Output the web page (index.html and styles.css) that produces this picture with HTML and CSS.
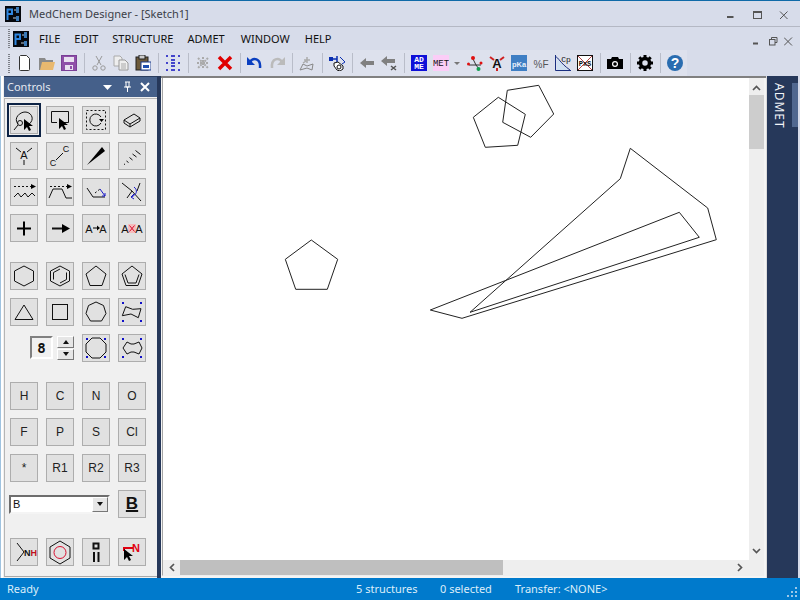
FILE: index.html
```html
<!DOCTYPE html>
<html lang="en">
<head>
  <meta charset="UTF-8">
  <title>MedChem Designer - [Sketch1]</title>
  <link rel="stylesheet" href="styles.css">
</head>
<body>
  <div class="app">
    <div class="titlebar">
      <svg class="logo" viewBox="0 0 16 16"><rect width="16" height="16" fill="#05070d"/><path d="M2.500 14V3.500h4.500V8H3" stroke="#2f86e0" stroke-width="2" fill="none"/><path d="M11 1h3v6h-3zM11 10h3v5h-3z" fill="#3a79b8"/><path d="M9 4h2M8 12h3" stroke="#bcd" fill="none"/></svg>
      <span class="title-text">MedChem Designer - [Sketch1]</span>
      <div class="win-btns">
        <svg class="win-icon" viewBox="0 0 10 10"><path d="M0 8h6.500" stroke-width="2"/></svg>
        <svg class="win-icon" viewBox="0 0 10 10"><rect x=".5" y="2.500" width="8" height="7"/><path d="M0 3h9" stroke-width="2"/></svg>
        <svg class="win-icon" viewBox="0 0 10 10"><path d="M1 2.500L8.500 10M8.500 2.500L1 10"/></svg>
      </div>
    </div>

    <div class="menubar">
      <div class="grip"></div>
      <svg class="logo" viewBox="0 0 16 16"><rect width="16" height="16" fill="#05070d"/><path d="M2.500 14V3.500h4.500V8H3" stroke="#2f86e0" stroke-width="2" fill="none"/><path d="M11 1h3v6h-3zM11 10h3v5h-3z" fill="#3a79b8"/><path d="M9 4h2M8 12h3" stroke="#bcd" fill="none"/></svg>
      <nav class="menu">
        <span>FILE</span>
        <span>EDIT</span>
        <span>STRUCTURE</span>
        <span>ADMET</span>
        <span>WINDOW</span>
        <span>HELP</span>
      </nav>
      <div class="mdi-btns">
        <svg class="mdi-icon" viewBox="0 0 10 14"><path d="M1 11.500h5" stroke-width="2"/></svg>
        <svg class="mdi-icon" viewBox="0 0 10 14"><path d="M3.500 7V5.500h5.500v5H7"/><rect x="1.500" y="7.500" width="5.500" height="5.500"/></svg>
        <svg class="mdi-icon" viewBox="0 0 10 14"><path d="M0 5.500l8 8M8 5.500l-8 8"/></svg>
      </div>
    </div>

    <div class="toolbar">
      <div class="grip"></div>
      <div class="tb-group">
        <span class="tb-btn"><svg class="tb-icon" viewBox="0 0 16 16"><path d="M3.500 .5h6l3 3v11a1 1 0 0 1-1 1h-8a1 1 0 0 1-1-1v-13z" fill="#fff" stroke="#333"/></svg></span>
        <span class="tb-btn"><svg class="tb-icon" viewBox="0 0 16 16"><path d="M0 3h6l1 2h7v2H4L2 15H0z" fill="#8a8a8a"/><path d="M3 7h13l-2 8H1z" fill="#e9b96f"/></svg></span>
        <span class="tb-btn"><svg class="tb-icon" viewBox="0 0 16 16"><rect x=".5" y=".5" width="15" height="15" fill="#8f4fa8" stroke="#7a3f96"/><rect x="3" y="2" width="10" height="5" fill="#e8e0f0"/><rect x="4" y="10" width="8" height="5" fill="#e8e0f0"/><rect x="9" y="11" width="2" height="3" fill="#8f4fa8"/></svg></span>
      </div>
      <div class="tb-sep"></div>
      <div class="tb-group">
        <span class="tb-btn"><svg class="tb-icon" viewBox="0 0 16 16"><path d="M5 1l5 9M11 1L6 10" stroke="#999"/><circle cx="4" cy="13" r="2.200" stroke="#999"/><circle cx="12" cy="13" r="2.200" stroke="#999"/></svg></span>
        <span class="tb-btn"><svg class="tb-icon" viewBox="0 0 16 16"><path d="M1 1h6l2 2v8H1z" fill="#eee" stroke="#aaa"/><path d="M6 5h6l3 3v7H6z" fill="#eee" stroke="#999"/><path d="M8 9h5M8 11h5M8 13h5" stroke="#aaa"/></svg></span>
        <span class="tb-btn"><svg class="tb-icon" viewBox="0 0 16 16"><rect x="1" y="2" width="12" height="13" fill="#6d5a3a" stroke="#222"/><rect x="4" y="0" width="6" height="4" fill="#ccc" stroke="#222"/><rect x="6" y="7" width="10" height="8" fill="#fff" stroke="#1f3f8f"/><rect x="8" y="10" width="6" height="3" fill="#1f4fb0"/></svg></span>
      </div>
      <div class="tb-sep"></div>
      <span class="tb-btn"><svg class="tb-icon" viewBox="0 0 16 16"><path d="M1 1h2M6 1h4M13 1h2M1 8h2M6 5h4M6 8h4M6 11h4M13 8h2M1 15h2M6 15h4M13 15h2" stroke="#1010c0" stroke-width="1.500"/></svg></span>
      <div class="tb-sep"></div>
      <div class="tb-group">
        <span class="tb-btn"><svg class="tb-icon" viewBox="0 0 16 16"><path d="M3 3l10 10M13 3L3 13M8 2v12M2 8h12" stroke="#aaa" stroke-width="2" stroke-dasharray="2 1"/></svg></span>
        <span class="tb-btn"><svg class="tb-icon" viewBox="0 0 16 16"><path d="M2 2l12 12M14 2L2 14" stroke="#e00000" stroke-width="3.500"/></svg></span>
      </div>
      <div class="tb-sep"></div>
      <div class="tb-group">
        <span class="tb-btn"><svg class="tb-icon" viewBox="0 0 16 16"><path d="M3 7C6 2 14 3 13 13" stroke="#0a3fc0" stroke-width="2.500"/><path d="M0 2v8h8z" fill="#0a3fc0"/></svg></span>
        <span class="tb-btn"><svg class="tb-icon" viewBox="0 0 16 16"><path d="M13 7C10 2 2 3 3 13" stroke="#bbb" stroke-width="2.500"/><path d="M16 2v8H8z" fill="#bbb"/></svg></span>
      </div>
      <div class="tb-sep"></div>
      <span class="tb-btn"><svg class="tb-icon" viewBox="0 0 16 16"><path d="M1 15l3-6 4 2 6-2-1 6-5-2z" stroke="#888"/><path d="M8 2v6M5 5h6M4 8l3-2" stroke="#aaa" stroke-width="1.500"/></svg></span>
      <div class="tb-sep"></div>
      <span class="tb-btn"><svg class="tb-icon" viewBox="0 0 16 16"><path d="M1 4h7M8 1v6" stroke="#0a2fb0" stroke-width="1.500"/><rect x="0" y="2" width="4" height="4" fill="#0a2fb0"/><path d="M11 2l5 5-3 2" stroke="#0a2fb0"/><path d="M5 8l4-1 5 4v3l-3 2-3-1-3-4z" fill="#fff" stroke="#111"/><circle cx="10" cy="12" r="2" stroke="#111"/></svg></span>
      <div class="tb-sep"></div>
      <div class="tb-group">
        <span class="tb-btn"><svg class="tb-icon" viewBox="0 0 16 16"><path d="M1 8l6-5v3h8v4H7v3z" fill="#808080"/></svg></span>
        <span class="tb-btn"><svg class="tb-icon" viewBox="0 0 16 16"><path d="M0 6l6-5v3h8v4H6v3z" fill="#808080"/><path d="M10 11l5 4M15 11l-5 4" stroke="#555" stroke-width="1.500"/></svg></span>
      </div>
      <div class="tb-sep"></div>
      <div class="tb-group">
        <span class="tb-btn"><svg class="tb-icon" viewBox="0 0 16 16"><rect width="16" height="16" fill="#0f10d8"/><text class="adme-text" x="8" y="6.500">AD</text><text class="adme-text" x="8" y="14">ME</text></svg></span>
        <span class="tb-btn"><svg class="tb-icon" viewBox="0 0 16 16"><rect width="16" height="16" fill="#fbcdf7"/><text class="met-text" x="8" y="11">MET</text></svg></span>
        <span class="tb-drop"></span>
        <span class="tb-btn"><svg class="tb-icon" viewBox="0 0 16 16"><path d="M6 4l3 6 5 0M9 10l-7 0M9 10l3 4" stroke="#333"/><circle cx="6" cy="3" r="2" fill="#e01010"/><circle cx="1.500" cy="9" r="1.500" fill="#e01010"/><circle cx="14" cy="8" r="1.500" fill="#e01010"/><circle cx="11.500" cy="14" r="2" fill="#10a050"/></svg></span>
        <span class="tb-btn"><svg class="tb-icon" viewBox="0 0 16 16"><path d="M1 2l4 3M15 2l-4 3M8 13v3" stroke="#d02020" stroke-width="2"/><text class="a-text" x="8" y="13">A</text></svg></span>
        <span class="tb-btn"><svg class="tb-icon" viewBox="0 0 16 16"><rect width="16" height="16" fill="#3f7fc4"/><text class="pka-text" x="8" y="12">pKa</text></svg></span>
        <span class="tb-btn"><svg class="tb-icon" viewBox="0 0 16 16"><text class="pf-text" x="8" y="13">%F</text></svg></span>
        <span class="tb-btn"><svg class="tb-icon" viewBox="0 0 16 16"><path d="M.5 0v15.500H16" stroke="#1a2f80"/><path d="M2 15V4l11 11z" fill="#cfe0f2"/><path d="M1 2c2 0 4 6 14 13" stroke="#1a2f80"/><text class="cp-text" x="11" y="6.500">Cp</text></svg></span>
        <span class="tb-btn"><svg class="tb-icon" viewBox="0 0 16 16"><rect x=".5" y=".5" width="15" height="15" fill="#fff" stroke="#111"/><path d="M1 1l14 14M15 1L1 15" stroke="#b04040"/><text class="pxs-text" x="8" y="11">PxS</text></svg></span>
      </div>
      <div class="tb-sep"></div>
      <span class="tb-btn"><svg class="tb-icon" viewBox="0 0 16 16"><path d="M0 4h4l1-2h6l1 2h4v10H0z" fill="#000"/><circle cx="8" cy="9" r="3" fill="#fff"/><circle cx="8" cy="9" r="1.800" fill="#000"/></svg></span>
      <div class="tb-sep"></div>
      <span class="tb-btn"><svg class="tb-icon" viewBox="0 0 16 16"><circle cx="8" cy="8" r="4.500" stroke="#000" stroke-width="3.500"/><path d="M8 0v3M8 13v3M0 8h3M13 8h3M2.300 2.300l2.200 2.200M11.500 11.500l2.200 2.200M13.700 2.300l-2.200 2.200M4.500 11.500l-2.200 2.200" stroke="#000" stroke-width="3"/></svg></span>
      <div class="tb-sep"></div>
      <span class="tb-btn"><svg class="tb-icon" viewBox="0 0 16 16"><circle cx="8" cy="8" r="8" fill="#2a6db0"/><text class="help-text" x="8" y="13">?</text></svg></span>
    </div>

    <div class="main">
      <aside class="controls">
        <header class="controls-head">
          <span>Controls</span>
          <svg class="head-icons" viewBox="0 0 50 12"><path d="M0 4h9l-4.500 5z" fill="#fff" stroke="none"/><path d="M22 1h5M23 1v5h3V1M21 6h7M24.500 6v5" stroke="#fff"/><path d="M38 2l8 8M46 2l-8 8" stroke="#fff" stroke-width="2"/></svg>
        </header>
        <div class="controls-body">
          <div class="tool-grid">
            <button class="tool tool-active"><svg class="ic" viewBox="0 0 26 26"><path d="M7 17C2 11 9 5 14 5c6 0 9 6 6 10-1 2-3 3-5 3"/><circle cx="9" cy="16" r="2.500"/><path d="M7 18l-4 5"/><path class="fk" d="M13 12v11l3-3 2 4 2-1-2-4h4z"/></svg></button>
            <button class="tool"><svg class="ic" viewBox="0 0 26 26"><path d="M17 15.500h4.500v-11h-17v11H10"/><path class="fk" d="M12 11v11l3-3 2 4 2-1-2-4h4z"/></svg></button>
            <button class="tool"><svg class="ic" viewBox="0 0 26 26"><rect class="dash" x="3.500" y="3.500" width="19" height="19"/><path d="M18 16a6 6 0 1 1 0-6"/><path class="fk" d="M16 12h5l-2.500 3z"/></svg></button>
            <button class="tool"><svg class="ic" viewBox="0 0 26 26"><path d="M5 13l10-6 6 4v3l-10 6-6-4zM5 13l6 4 10-6M11 17v3"/></svg></button>

            <button class="tool"><svg class="ic" viewBox="0 0 26 26"><path d="M5 5l5 4M21 5l-5 4M13 17v5"/><text class="ic-text" x="13" y="16">A</text></svg></button>
            <button class="tool"><svg class="ic" viewBox="0 0 26 26"><path d="M9 17l7-7"/><text class="c-text" x="19" y="9">C</text><text class="c-text" x="6" y="23">C</text></svg></button>
            <button class="tool"><svg class="ic" viewBox="0 0 26 26"><path class="fk" d="M4 22L19 4l3 4z"/></svg></button>
            <button class="tool"><svg class="ic" viewBox="0 0 26 26"><path d="M5 21l1 .5M7.500 18l2 1.500M10.500 14.500l3 2.500M13.500 11l4 3M16.500 7.500l5 4"/></svg></button>

            <button class="tool"><svg class="ic" viewBox="0 0 26 26"><path class="dash" d="M3 7.500h18"/><path class="fk" d="M20 5l5 2.500-5 2.500z"/><path d="M3 18l4-4 3 4 4-4 3 4 4-4 3 3"/></svg></button>
            <button class="tool"><svg class="ic" viewBox="0 0 26 26"><path class="dash" d="M3 7.500h18"/><path class="fk" d="M20 5l5 2.500-5 2.500z"/><path d="M2 19l4-9h9l4 9h6"/></svg></button>
            <button class="tool"><svg class="ic" viewBox="0 0 26 26"><path d="M4 9l6 9h12"/><path class="dash" d="M12 14l5-4"/><path class="ic-blue" d="M17 10l5 7M19 17h3v-3"/></svg></button>
            <button class="tool"><svg class="ic" viewBox="0 0 26 26"><path d="M3 4l10 8 9 10M21 4l-3 8M13 12l-5 7"/><path class="ic-blue" d="M15 8c4 3 3 8-3 10M15 15l-3 3 3 2"/></svg></button>

            <button class="tool"><svg class="ic ic-bold" viewBox="0 0 26 26"><path d="M6 13.500h14M13 6.500v14"/></svg></button>
            <button class="tool"><svg class="ic" viewBox="0 0 26 26"><path d="M5 13.500h12" stroke-width="2"/><path class="fk" d="M15 9l8 4.500-8 4.500z"/></svg></button>
            <button class="tool"><svg class="ic" viewBox="0 0 26 26"><text class="ic-text" x="6" y="18">A</text><text class="ic-text" x="20" y="18">A</text><path class="fk" d="M10 12.500h4v-2l3 2.500-3 2.500v-2h-4z"/></svg></button>
            <button class="tool"><svg class="ic" viewBox="0 0 26 26"><rect class="pink" x="9" y="9" width="8" height="9"/><text class="ic-text" x="6" y="18">A</text><text class="ic-text" x="20" y="18">A</text><path class="ic-red" d="M10.500 10.500l5 6M15.500 10.500l-5 6"/></svg></button>
          </div>

          <div class="tool-grid">
            <button class="tool"><svg class="ic" viewBox="0 0 26 26"><path d="M13 3l9.500 5v10L13 23l-9.500-5V8z"/></svg></button>
            <button class="tool"><svg class="ic" viewBox="0 0 26 26"><path d="M13 3l9.500 5v10L13 23l-9.500-5V8z"/><path d="M13 6l-6.500 3.500v7M19.500 9.500v7M13 20l6.500-3.500"/></svg></button>
            <button class="tool"><svg class="ic" viewBox="0 0 26 26"><path d="M13 3l10 8-4 11.500H7L3 11z"/></svg></button>
            <button class="tool"><svg class="ic" viewBox="0 0 26 26"><path d="M13 3l10 8-4 11.500H7L3 11z"/><path d="M6 11.500L9 20M20 11.500L17 20M9 20h8"/></svg></button>

            <button class="tool"><svg class="ic" viewBox="0 0 26 26"><path d="M13 6l9 14.500H4z"/></svg></button>
            <button class="tool"><svg class="ic" viewBox="0 0 26 26"><rect x="5.500" y="5.500" width="15" height="15"/></svg></button>
            <button class="tool"><svg class="ic" viewBox="0 0 26 26"><path d="M13 3l7.500 3.500 2.500 8-4.500 7.500h-11L3 14.500l2.500-8z"/></svg></button>
            <button class="tool"><svg class="ic" viewBox="0 0 26 26"><path d="M6.700 7.700l7 2.600 8.300-.6-2.700 9-7.300-3.700-8.700 1.700z"/><path class="dots" d="M3 4h2M21 4h2M3 22h2M21 22h2"/></svg></button>

            <div class="spinner-cell">
              <div class="spin-field">8</div>
              <div class="spin-btns">
                <span class="spin-btn"><i class="tri-up"></i></span>
                <span class="spin-btn"><i class="tri-down"></i></span>
              </div>
            </div>
            <button class="tool"><svg class="ic" viewBox="0 0 26 26"><path d="M9 3h8l6 6v8l-6 6H9l-6-6V9z"/><path class="dots" d="M3 4h2M21 4h2M3 22h2M21 22h2"/></svg></button>
            <button class="tool"><svg class="ic" viewBox="0 0 26 26"><path d="M8 7l4 2h3l5-2 3 6-3 6-5-2h-3l-4 2-4-6z"/><path class="dots" d="M3 4h2M21 4h2M3 22h2M21 22h2"/></svg></button>
          </div>

          <div class="tool-grid">
            <button class="tool">H</button>
            <button class="tool">C</button>
            <button class="tool">N</button>
            <button class="tool">O</button>
            <button class="tool">F</button>
            <button class="tool">P</button>
            <button class="tool">S</button>
            <button class="tool">Cl</button>
            <button class="tool">*</button>
            <button class="tool">R1</button>
            <button class="tool">R2</button>
            <button class="tool">R3</button>
            <div class="combo">
              <span class="combo-value">B</span>
              <span class="combo-btn"><i class="tri-down"></i></span>
            </div>
            <button class="tool tool-b">B</button>
          </div>

          <div class="tool-grid">
            <button class="tool"><svg class="ic" viewBox="0 0 26 26"><path d="M6 4l7 9-7 9"/><text class="nh-text" x="13" y="17">N<tspan class="red-fill">H</tspan></text></svg></button>
            <button class="tool"><svg class="ic" viewBox="0 0 26 26"><path d="M13 2l10 6v11l-10 6-10-6V8z"/><circle class="ic-red" cx="13" cy="13.500" r="6"/></svg></button>
            <button class="tool"><svg class="ic" viewBox="0 0 26 26"><rect class="bold-line" x="10.500" y="4.500" width="5" height="5"/><path class="bold-line" d="M11 13v10M15.500 13v10"/></svg></button>
            <button class="tool"><svg class="ic" viewBox="0 0 26 26"><path class="ic-red-b" d="M5 12V9h9"/><text class="n-text" x="17" y="13">N</text><path class="fk" d="M5 10v11l3-3 2 4 2-1-2-4h4z"/></svg></button>
          </div>
        </div>
      </aside>

      <div class="divider"></div>

      <section class="sketch">
        <div class="canvas">
          <svg class="drawing" viewBox="163 78 586 482">
            <polygon points="498.300,97.300 525.300,114.300 517.700,145.300 485.300,147.300 473.300,117.300"/>
            <polygon points="507.300,90.300 538.700,85.300 553.700,114 530.700,137.300 502.700,122.300"/>
            <polygon points="630.300,148.300 707.700,208 716.300,239.700 462,318.300 430.300,310 679.300,212.300 699.300,237.300 470,312.300 620.300,178.700"/>
            <polygon points="311.300,240 337.700,259.300 327.300,289.300 295.700,289.300 285.300,259.300"/>
          </svg>
        </div>
        <div class="vscroll">
          <svg class="sb-arrow" viewBox="0 0 9 6"><path d="M1 5l3.500-3.500L8 5"/></svg>
          <div class="vtrack"><div class="vthumb"></div></div>
          <svg class="sb-arrow" viewBox="0 0 9 6"><path d="M1 1l3.500 3.500L8 1"/></svg>
        </div>
        <div class="hscroll">
          <svg class="sb-arrow-h" viewBox="0 0 6 9"><path d="M5 1L1.500 4.500 5 8"/></svg>
          <div class="htrack"><div class="hthumb"></div></div>
          <svg class="sb-arrow-h" viewBox="0 0 6 9"><path d="M1 1l3.500 3.500L1 8"/></svg>
        </div>
        <div class="corner"></div>
      </section>

      <div class="side-tabs">
        <span class="side-label">ADMET</span>
        <div class="side-strip"></div>
      </div>
    </div>

    <footer class="statusbar">
      <span class="status-ready">Ready</span>
      <span class="pane-structures">5 structures</span>
      <span class="pane-selected">0 selected</span>
      <span class="pane-transfer">Transfer: &lt;NONE&gt;</span>
      <svg class="size-grip" viewBox="0 0 10 10"><path d="M8 0h2v2H8zM4 4h2v2H4zM8 4h2v2H8zM0 8h2v2H0zM4 8h2v2H4zM8 8h2v2H8z"/></svg>
    </footer>
  </div>
</body>
</html>
```

FILE: styles.css
```css
* {
  margin: 0;
  padding: 0;
  box-sizing: border-box;
}

body {
  font-family: "Noto Sans", "Open Sans", sans-serif;
  background: #d7dcea;
  overflow: hidden;
}

.app {
  width: 800px;
  height: 600px;
  display: flex;
  flex-direction: column;
  background: #d7dcea;
  border-top: 1px solid #0f6aa8;
}

/* title */
.titlebar {
  height: 26px;
  flex: none;
  display: flex;
  align-items: center;
  padding-left: 5px;
  border-bottom: 1px solid #b4b8c4;
}

.logo {
  width: 16px;
  height: 16px;
  flex: none;
}

.title-text {
  margin-left: 8px;
  font-size: 11px;
  color: #3c3f48;
}

.win-btns {
  margin-left: auto;
  display: flex;
  gap: 16px;
  padding-right: 11px;
}

.win-icon {
  width: 10px;
  height: 10px;
  overflow: visible;
  fill: none;
  stroke: #555;
}

/* menu */
.menubar {
  height: 23px;
  flex: none;
  display: flex;
  align-items: center;
  padding-left: 8px;
}

.grip {
  width: 2px;
  height: 19px;
  flex: none;
  margin-right: 3px;
  background: repeating-linear-gradient(#7d8088 0 1px, transparent 1px 2px);
}

.menu {
  display: flex;
  margin-left: 3px;
  font-size: 11px;
  color: #111;
}

.menu span {
  padding: 0 7px;
}

.menu span:nth-child(5) {
  margin-left: 2px;
}

.menu span:nth-child(6) {
  margin-left: 1px;
}

.mdi-btns {
  margin-left: auto;
  display: flex;
  gap: 6px;
  padding-right: 6px;
}

.mdi-icon {
  width: 10px;
  height: 14px;
  fill: none;
  stroke: #555;
}

/* toolbar */
.toolbar {
  width: 687px;
  height: 26px;
  flex: none;
  display: flex;
  align-items: center;
  padding-left: 8px;
  background: #dde1ed;
}

.toolbar .grip {
  margin-right: 4px;
}

.tb-group {
  display: flex;
  align-items: center;
}

.tb-btn {
  width: 22px;
  height: 22px;
  flex: none;
  display: flex;
  align-items: center;
  justify-content: center;
}

.tb-icon {
  width: 16px;
  height: 16px;
  fill: none;
  stroke: none;
}

.tb-sep {
  width: 8px;
  height: 20px;
  flex: none;
  background: linear-gradient(#b9bdc9, #b9bdc9) center / 1px 100% no-repeat;
}

.tb-drop {
  width: 12px;
  height: 22px;
  flex: none;
  position: relative;
}

.tb-drop::after {
  content: "";
  position: absolute;
  left: 2px;
  top: 10px;
  border: 3px solid transparent;
  border-top: 3px solid #777;
}

.tb-icon text {
  text-anchor: middle;
  font-family: "Liberation Mono", monospace;
}

.tb-icon .adme-text {
  font-size: 8px;
  font-weight: bold;
  fill: #fff;
}

.tb-icon .met-text {
  font-size: 9px;
  fill: #111;
}

.tb-icon .a-text {
  font-family: "Liberation Sans", sans-serif;
  font-size: 13px;
  font-weight: bold;
  fill: #111;
}

.tb-icon .pka-text {
  font-family: "Liberation Sans", sans-serif;
  font-size: 7.500px;
  font-weight: bold;
  fill: #e8f0fa;
}

.tb-icon .pf-text {
  font-family: "Liberation Sans", sans-serif;
  font-size: 10px;
  fill: #555;
}

.tb-icon .cp-text {
  font-size: 8px;
  fill: #111;
}

.tb-icon .pxs-text {
  font-size: 7px;
  font-weight: bold;
  fill: #111;
}

.tb-icon .help-text {
  font-family: "Liberation Sans", sans-serif;
  font-size: 14px;
  font-weight: bold;
  fill: #fff;
}

/* main */
.main {
  flex: 1;
  min-height: 0;
  display: flex;
}

.controls {
  width: 157px;
  flex: none;
  display: flex;
  flex-direction: column;
  padding-left: 3px;
  background: #f0f0f0;
  border-left: 1px solid #9fc3e0;
  box-shadow: inset 2px 0 0 #fff;
}

.controls-head {
  height: 21px;
  flex: none;
  display: flex;
  align-items: center;
  justify-content: space-between;
  padding: 0 4px 1px 3px;
  background: #45608a;
  border-top: 1px solid #2a3d5e;
  color: #e4e8f0;
  font-size: 11px;
}

.head-icons {
  width: 50px;
  height: 12px;
  fill: none;
}

.controls-body {
  flex: 1;
  display: flex;
  flex-direction: column;
  gap: 20px;
  padding: 7px 0 0 5px;
  border: 1px solid #b5b5b5;
  border-right: none;
  border-bottom-color: #a9a9a9;
  margin-top: 1px;
  margin-bottom: 1px;
}

.tool-grid {
  display: grid;
  grid-template-columns: repeat(4, 28px);
  grid-auto-rows: 28px;
  gap: 8px;
}

.tool {
  display: flex;
  align-items: center;
  justify-content: center;
  background: #e1e1e1;
  border: 1px solid #adadad;
  font-family: "Liberation Sans", sans-serif;
  font-size: 12px;
  color: #222;
}

.tool-active {
  outline: 2px solid #0d2345;
  outline-offset: 1px;
}

.tool-b {
  font-size: 17px;
  font-weight: bold;
  color: #111;
  text-decoration: underline;
  text-decoration-thickness: 2px;
}

.ic {
  width: 26px;
  height: 26px;
  fill: none;
  stroke: #111;
}

.ic .fk {
  fill: #000;
  stroke: none;
}

.ic .dash {
  stroke-dasharray: 2 2;
}

.ic-bold {
  stroke-width: 2px;
  stroke: #000;
}

.ic .ic-blue {
  stroke: #1a1ac8;
}

.ic .ic-red {
  stroke: #d81030;
}

.ic .ic-red-b {
  stroke: #e00010;
  stroke-width: 2px;
}

.ic .pink {
  fill: #f6bcbc;
  stroke: none;
}

.ic .dots {
  stroke: #1010c8;
  stroke-width: 2px;
}

.ic .bold-line {
  stroke: #111;
  stroke-width: 2px;
}

.ic text {
  stroke: none;
  fill: #111;
  text-anchor: middle;
  font-family: "Liberation Sans", sans-serif;
}

.ic .ic-text {
  font-size: 11px;
}

.ic .c-text {
  font-size: 9px;
}

.ic .nh-text {
  text-anchor: start;
  font-size: 9px;
  font-weight: bold;
}

.ic .red-fill {
  fill: #c01020;
}

.ic .n-text {
  fill: #e00010;
  font-size: 11px;
  font-weight: bold;
}

/* spinner */
.spinner-cell {
  grid-column: span 2;
  display: flex;
  justify-content: flex-end;
  gap: 4px;
  padding-top: 2px;
}

.spin-field {
  width: 23px;
  height: 23px;
  display: flex;
  align-items: center;
  justify-content: center;
  background: #f0f0f0;
  border: 2px solid;
  border-color: #808080 #fff #fff #808080;
  font-family: "DejaVu Sans Mono", monospace;
  font-size: 14px;
  font-weight: bold;
  color: #111;
}

.spin-btns {
  display: flex;
  flex-direction: column;
  gap: 1px;
  width: 17px;
}

.spin-btn {
  height: 11.500px;
  display: flex;
  align-items: center;
  justify-content: center;
  background: #e6e6e6;
  border: 1px solid;
  border-color: #fff #777 #777 #fff;
}

.tri-up,
.tri-down {
  width: 0;
  height: 0;
  border: 3.500px solid transparent;
}

.tri-up {
  border-top: none;
  border-bottom: 4px solid #111;
}

.tri-down {
  border-bottom: none;
  border-top: 4px solid #111;
}

/* combo */
.combo {
  grid-column: span 3;
  height: 19px;
  align-self: center;
  margin-left: -1px;
  display: flex;
  align-items: center;
  justify-content: space-between;
  background: #fff;
  border: 2px solid;
  border-color: #6d6d6d #f4f4f4 #f4f4f4 #6d6d6d;
}

.combo-value {
  padding-left: 2px;
  font-family: "Liberation Sans", sans-serif;
  font-size: 11px;
  color: #111;
}

.combo-btn {
  width: 16px;
  height: 15px;
  display: flex;
  align-items: center;
  justify-content: center;
  background: #e6e6e6;
  border: 1px solid;
  border-color: #fff #777 #777 #fff;
}

.divider {
  width: 4px;
  flex: none;
  background: #26385a;
}

/* sketch area */
.sketch {
  width: 606px;
  flex: none;
  display: grid;
  grid-template-columns: 1fr 15px;
  grid-template-rows: 1fr 16px;
  padding: 0 2px 2px 1px;
  background: linear-gradient(#808080 0 2px, #f4f4f4 2px);
  border-right: 1px solid #dcdcdc;
}

.canvas {
  min-height: 0;
  margin-top: 2px;
  background: #fff;
  border-left: 1px solid #a6a6a6;
}

.drawing {
  display: block;
  width: 100%;
  height: 100%;
  fill: none;
  stroke: #222;
  stroke-width: 1;
}

.vscroll {
  margin-top: 2px;
  display: flex;
  flex-direction: column;
  align-items: center;
  background: #eee;
}

.sb-arrow {
  width: 9px;
  height: 6px;
  margin: 7px 0 4px;
  flex: none;
  fill: none;
  stroke: #555;
  stroke-width: 1.700;
}

.sb-arrow:last-child {
  margin: 4px 0 6px;
}

.vtrack {
  flex: 1;
  width: 100%;
}

.vthumb {
  height: 54px;
  background: #cdcdcd;
}

.hscroll {
  display: flex;
  align-items: center;
  background: #eee;
  padding: 0 6px;
  border-bottom: 1px solid #eee;
  border-left: 1px solid #a6a6a6;
}

.sb-arrow-h {
  width: 6px;
  height: 9px;
  flex: none;
  fill: none;
  stroke: #555;
  stroke-width: 1.700;
}

.htrack {
  flex: 1;
  align-self: stretch;
  margin: 0 5px 0 5px;
}

.hthumb {
  width: 323px;
  height: 100%;
  background: #bfbfbf;
}

.corner {
  background: #eee;
}

/* admet tab */
.side-tabs {
  width: 31px;
  flex: none;
  position: relative;
  background: #26385a;
  margin-right: 2px;
}

.side-label {
  position: absolute;
  left: 4px;
  top: 7px;
  writing-mode: vertical-rl;
  font-size: 12px;
  letter-spacing: 1px;
  color: #f2f4f8;
}

.side-strip {
  position: absolute;
  right: 0;
  top: 7px;
  width: 6px;
  height: 44px;
  background: #50678f;
}

/* status */
.statusbar {
  height: 22px;
  flex: none;
  display: flex;
  align-items: center;
  background: #007acc;
  color: #dcedf9;
  font-size: 11px;
  padding: 0 0 2px 7px;
  position: relative;
}

.status-ready {
  width: 349px;
}

.pane-structures {
  width: 84px;
}

.pane-selected {
  width: 75px;
}

.size-grip {
  position: absolute;
  right: 3px;
  bottom: 3px;
  width: 10px;
  height: 10px;
  fill: #9cc7e8;
}
```
